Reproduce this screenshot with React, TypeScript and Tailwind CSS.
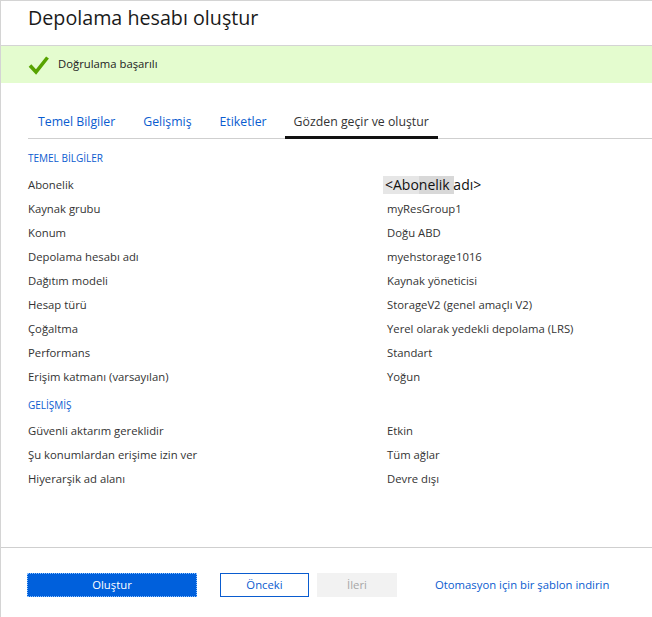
const temel = [
  ["Abonelik", "<Abonelik adı>"],
  ["Kaynak grubu", "myResGroup1"],
  ["Konum", "Doğu ABD"],
  ["Depolama hesabı adı", "myehstorage1016"],
  ["Dağıtım modeli", "Kaynak yöneticisi"],
  ["Hesap türü", "StorageV2 (genel amaçlı V2)"],
  ["Çoğaltma", "Yerel olarak yedekli depolama (LRS)"],
  ["Performans", "Standart"],
  ["Erişim katmanı (varsayılan)", "Yoğun"],
];

const gelismis = [
  ["Güvenli aktarım gereklidir", "Etkin"],
  ["Şu konumlardan erişime izin ver", "Tüm ağlar"],
  ["Hiyerarşik ad alanı", "Devre dışı"],
];

const tabs = ["Temel Bilgiler", "Gelişmiş", "Etiketler", "Gözden geçir ve oluştur"];

function Row({ label, value }: { label: string; value: string }) {
  const isSub = value === "<Abonelik adı>";
  return (
    <div className="flex h-[24px] items-center">
      <div className="w-[359px] shrink-0">{label}</div>
      {isSub ? (
        <span className="-ml-[4px] bg-[linear-gradient(90deg,#e6e6e6_0_36px,#d8d8d8_36px_71px,transparent_71px)] pl-[2px] text-[14px] leading-[18px] text-[#111]">
          {value}
        </span>
      ) : (
        <div>{value}</div>
      )}
    </div>
  );
}

export default function App() {
  return (
    <div className="flex h-[617px] w-[652px] flex-col border-l border-t border-[#d4d4d4] bg-white font-['Open_Sans',sans-serif] text-[11.3px] text-[#333]">
      {/* header */}
      <div className="h-[45px] shrink-0 border-b border-[#d4d4d4] pl-[27px] pt-[4px]">
        <h1 className="text-[19.7px] leading-[26px] text-[#1a1a1a]">Depolama hesabı oluştur</h1>
      </div>

      {/* validation banner */}
      <div className="flex h-[37px] shrink-0 items-center gap-[9px] bg-[#e4fccf] pl-[27px]">
        <svg width="21" height="20" viewBox="0 0 21 20">
          <path d="M2 10.5 L8 17 L19.5 2.5" fill="none" stroke="#57a300" strokeWidth="3.6" strokeLinejoin="miter" />
        </svg>
        <span className="text-[11.3px] text-[#222]">Doğrulama başarılı</span>
      </div>

      {/* main */}
      <div className="flex-1 pl-[27px]">
        <div className="mt-[22px] flex gap-[8px] border-b border-[#cfcfcf]">
          {tabs.map((t, i) => (
            <div
              key={t}
              className={
                i === 3
                  ? "-mb-px border-b-[3px] border-[#111] px-[9px] pb-[5px] pt-[8px] text-[12.3px] leading-[18px] text-[#333]"
                  : "-mb-px border-b-[3px] border-transparent px-[10px] pb-[5px] pt-[8px] text-[12.3px] leading-[18px] text-[#0a5ccf]"
              }
            >
              {t}
            </div>
          ))}
        </div>

        <div className="pt-[12px]">
          <div className="text-[10px] leading-[14px] text-[#0a5ccf]">TEMEL BİLGİLER</div>
          <div className="mt-[8px]">
            {temel.map(([l, v]) => (
              <Row key={l} label={l} value={v} />
            ))}
          </div>
          <div className="mt-[9px] text-[10px] leading-[14px] text-[#0a5ccf]">GELİŞMİŞ</div>
          <div className="mt-[7px]">
            {gelismis.map(([l, v]) => (
              <Row key={l} label={l} value={v} />
            ))}
          </div>
        </div>
      </div>

      {/* footer */}
      <div className="flex h-[70px] shrink-0 items-start border-t border-[#cfcfcf] pl-[26px] pt-[25px]">
        <button className="h-[24px] w-[170px] border border-dotted border-[#8ec3ff] bg-[#0060dc] text-[11.3px] text-white">
          Oluştur
        </button>
        <button className="ml-[23px] h-[24px] w-[89px] border border-[#0a5ccf] bg-white text-[11.3px] text-[#0a5ccf]">
          Önceki
        </button>
        <button className="ml-[8px] h-[24px] w-[80px] bg-[#f2f2f2] text-[11.3px] text-[#a6a6a6]">İleri</button>
        <a className="ml-[38px] mt-[4px] text-[11.3px] text-[#0a5ccf]">Otomasyon için bir şablon indirin</a>
      </div>
    </div>
  );
}
